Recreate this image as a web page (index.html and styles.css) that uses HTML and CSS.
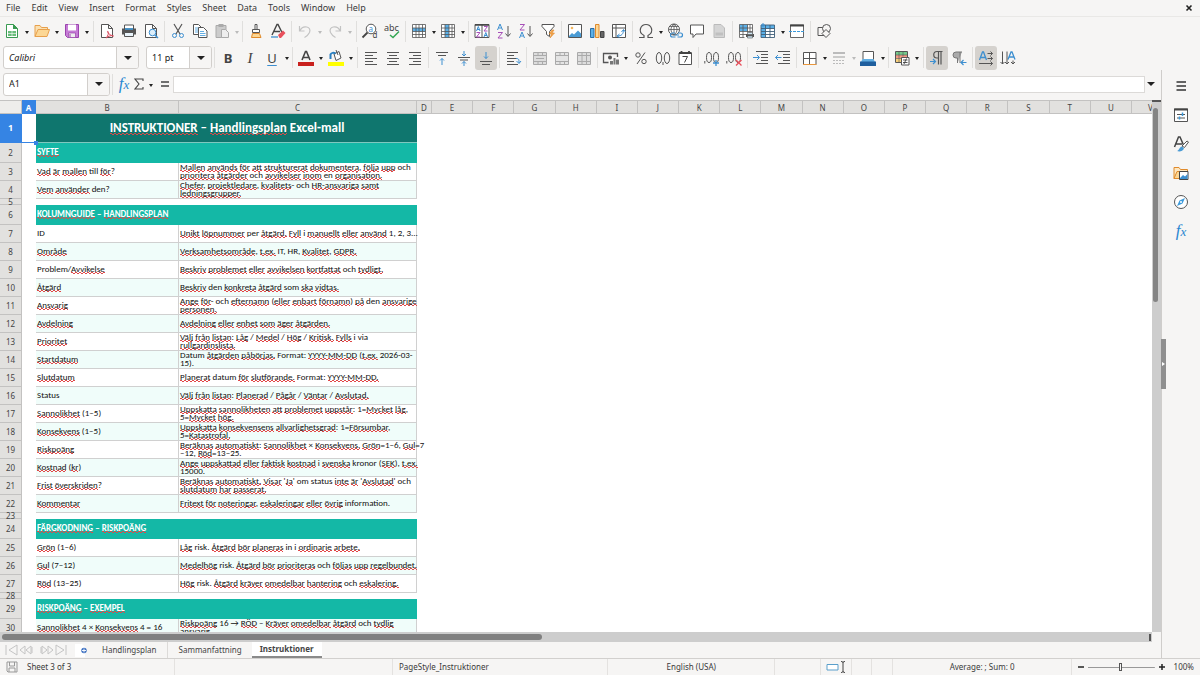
FILE: index.html
```html
<!DOCTYPE html>
<html lang="sv">
<head>
<meta charset="utf-8">
<title>Handlingsplan</title>
<link rel="stylesheet" href="styles.css">
</head>
<body>
<nav class="menubar">
<button>File</button><button>Edit</button><button>View</button><button>Insert</button><button>Format</button><button>Styles</button><button>Sheet</button><button>Data</button><button>Tools</button><button>Window</button><button>Help</button>
<button class="close" aria-label="Close"><svg width="8" height="8" viewBox="0 0 8 8"><path d="M1.500 1.500l5 5M6.500 1.500l-5 5" stroke="#222" stroke-width="1.600"/></svg></button>
</nav>

<div class="toolbar standard">
<button class="tool" aria-label="New"><svg viewBox="0 0 16 16"><path d="M2.500 1.500h7l4 4v9h-11z" fill="#fff" stroke="#3a9b52"/><path d="M9 1v5h5z" fill="#3a9b52"/><path d="M4 8h8v5h-8z" fill="#69bd7b"/><path d="M4 10.500h8M8 8v5" stroke="#fff" stroke-width=".6"/></svg></button><button class="drop" aria-label="New options"></button>
<button class="tool" aria-label="Open"><svg viewBox="0 0 16 16"><path d="M1 13.500v-11h5l1.500 2h6v3" fill="#fbe0b0" stroke="#e8a04c"/><path d="M1 13.500l3-7h11.500l-2.500 7z" fill="#fcd795" stroke="#e8a04c"/></svg></button><button class="drop" aria-label="Recent files"></button>
<button class="tool" aria-label="Save"><svg viewBox="0 0 16 16"><path d="M1.500 1.500h13v13h-11l-2-2z" fill="#c67bd6" stroke="#9a43ad"/><path d="M4 1.500h8v6h-8z" fill="#fff"/><path d="M4.500 10h7v4.500h-7z" fill="#eee" stroke="#9a43ad" stroke-width=".7"/><path d="M6 11v3" stroke="#9a43ad"/></svg></button><button class="drop" aria-label="Save options"></button>
<i class="sep"></i>
<button class="tool" aria-label="Export as PDF"><svg viewBox="0 0 16 16"><path d="M2.500 1.500h7l4 4v9h-11zM9.500 1.500v4h4" fill="#fff" stroke="#555"/><path d="M7 15c2-2 3-5 2-6.500s-1 3 5.500 4.500c-2-1-5 0-7.500 2z" fill="#fff" stroke="#d9485a"/></svg></button>
<button class="tool" aria-label="Print"><svg viewBox="0 0 16 16"><path d="M3.500 2h9v4h-9z" fill="#fff" stroke="#555"/><path d="M1 5.500h14v6h-14z" fill="#555"/><path d="M4 6h8" stroke="#3d9bdc" stroke-width="1.500"/><path d="M3.500 9.500h9v4h-9z" fill="#e9f4fb" stroke="#555"/></svg></button>
<button class="tool" aria-label="Print preview"><svg viewBox="0 0 16 16"><path d="M2.500 1.500h7l4 4v9h-11zM9.500 1.500v4h4" fill="#fff" stroke="#555"/><circle cx="9.500" cy="9.500" r="3.300" fill="#dceefa" stroke="#3d8fd0"/><path d="M12 12l3 3" stroke="#3d8fd0" stroke-width="1.500"/></svg></button>
<i class="sep"></i>
<button class="tool" aria-label="Cut"><svg viewBox="0 0 16 16"><path d="M4 1l6 10M12 1l-6 10" stroke="#555" stroke-width="1.200"/><circle cx="4.500" cy="12.500" r="2" fill="none" stroke="#3d8fd0"/><circle cx="11.500" cy="12.500" r="2" fill="none" stroke="#3d8fd0"/></svg></button>
<button class="tool" aria-label="Copy"><svg viewBox="0 0 16 16"><path d="M1.500 1.500h5l3 3v7h-8z" fill="#fff" stroke="#555"/><path d="M3 5h4M3 7h4M3 9h4" stroke="#3d9bdc" stroke-width=".8"/><path d="M6.500 4.500h5l3.500 3.500v6.500h-8.500z" fill="#fff" stroke="#555"/><path d="M8 8.500h4M8 10.500h5.500M8 12.500h5.500" stroke="#3d9bdc" stroke-width=".8"/></svg></button>
<button class="tool dim" aria-label="Paste" disabled><svg viewBox="0 0 16 16"><path d="M2 2.500h10v12h-10z" fill="#ccc" stroke="#aaa"/><path d="M4.500 1h5v3h-5z" fill="#aaa"/><path d="M7.500 6.500h4l3 3v5h-7z" fill="#eee" stroke="#aaa"/></svg></button><button class="drop narrow dim" aria-label="Paste options" disabled></button>
<i class="sep"></i>
<button class="tool" aria-label="Clone formatting"><svg viewBox="0 0 16 16"><path d="M7 1.500h2v5h-2zM4.500 6.500h7v3h-7z" fill="#fff" stroke="#555"/><path d="M4.500 10.500l-1 4h9.500l-1.500-4z" fill="#fcd795" stroke="#e08a2b"/></svg></button>
<button class="tool" aria-label="Clear formatting"><svg viewBox="0 0 16 16"><path d="M2 12l5-10.500h1l4 8M4 8.500h6" fill="none" stroke="#444" stroke-width="1.400"/><path d="M1 14h7" stroke="#3d8fd0" stroke-width="1.300"/><path d="M8 12l5-4.500 2.500 2.500-4.500 5h-1.500z" fill="#e8505c"/></svg></button>
<i class="sep"></i>
<button class="tool dim" aria-label="Undo" disabled><svg viewBox="0 0 16 16"><path d="M2.500 3v5h5M3 7.500c3-6 12-4 9.500 2-1 2-3 4-5 5" fill="none" stroke="#c3c3c3" stroke-width="1.200"/></svg></button><button class="drop dim" aria-label="Undo list" disabled></button>
<button class="tool dim" aria-label="Redo" disabled><svg viewBox="0 0 16 16"><path d="M13.500 3v5h-5M13 7.500c-3-6-12-4-9.500 2 1 2 3 4 5 5" fill="none" stroke="#c3c3c3" stroke-width="1.200"/></svg></button><button class="drop dim" aria-label="Redo list" disabled></button>
<i class="sep"></i>
<button class="tool" aria-label="Find and replace"><svg viewBox="0 0 16 16"><circle cx="9" cy="6" r="4.800" fill="#fff" stroke="#555"/><path d="M5.500 9.500l-5 5" stroke="#444" stroke-width="1.800"/><text x="6.500" y="8.500" class="glyph blue g8">a</text><text x="10.500" y="15" class="glyph g8">d</text></svg></button>
<button class="tool" aria-label="Spelling"><svg viewBox="0 0 16 16"><text x="0" y="7.500" class="glyph g9">abc</text><path d="M6 12l3 2.500 6-6" fill="none" stroke="#35a855" stroke-width="1.500"/></svg></button>
<i class="sep"></i>
<button class="tool" aria-label="Row"><svg viewBox="0 0 16 16"><path d="M1.500 1.500h13v13h-13z" fill="#fff"/><path d="M1.500 5h13v3.500h-13z" fill="#5bb0e8"/><path d="M1.500 1.500h13v13h-13zM1.500 5h13M1.500 8.500h13M1.500 11.500h13M5 1.500v13M8 1.500v13M11.500 1.500v13" fill="none" stroke="#555" stroke-width=".8"/></svg></button><button class="drop narrow" aria-label="Row options"></button>
<button class="tool" aria-label="Column"><svg viewBox="0 0 16 16"><path d="M1.500 1.500h13v13h-13z" fill="#fff"/><path d="M5 1.500h4v13h-4z" fill="#5bb0e8"/><path d="M1.500 1.500h13v13h-13zM1.500 5h13M1.500 8.500h13M1.500 11.500h13M5 1.500v13M9 1.500v13M12 1.500v13" fill="none" stroke="#555" stroke-width=".8"/></svg></button><button class="drop narrow" aria-label="Column options"></button>
<i class="sep"></i>
<button class="tool" aria-label="Sort"><svg viewBox="0 0 16 16"><path d="M1 1.500h14v13h-14zM8 2v13" fill="#fff" stroke="#555"/><path d="M1 2h14" stroke="#444" stroke-width="1.500"/><path d="M2.500 8l1.800-4.500L6 8M3 6.500h2.500M10 14l1.800-4.500L13.500 14M10.500 12.500H13" fill="none" stroke="#3d8fd0"/><path d="M2.500 9.500h3.500l-3.500 4.500h3.500M10 3.500h3.500L10 8h3.500" fill="none" stroke="#a74fb8"/></svg></button>
<button class="tool" aria-label="Sort ascending"><svg viewBox="0 0 16 16"><path d="M1.500 7l2.500-6 2.500 6M2.500 5h3" fill="none" stroke="#3d8fd0"/><path d="M2 9.500h4.500l-4.500 5.500h4.500" fill="none" stroke="#a74fb8"/><path d="M12 3v10M9.500 10.500l2.500 3 2.500-3" fill="none" stroke="#555"/></svg></button>
<button class="tool" aria-label="Sort descending"><svg viewBox="0 0 16 16"><path d="M2 1.500h4.500l-4.500 5.500h4.500" fill="none" stroke="#a74fb8"/><path d="M1.500 15l2.500-6 2.500 6M2.500 13h3" fill="none" stroke="#3d8fd0"/><path d="M12 3v10M9.500 10.500l2.500 3 2.500-3" fill="none" stroke="#555"/></svg></button>
<button class="tool" aria-label="AutoFilter"><svg viewBox="0 0 16 16"><path d="M2 1.500h12v2l-4.500 5v5l-3-2v-3l-4.500-5z" fill="#fff" stroke="#555"/><path d="M12 7l-3 4h2.500l-1.500 4 4.500-5h-2.500l2-3z" fill="#f3a54d" stroke="#e08a2b" stroke-width=".6"/></svg></button>
<i class="sep"></i>
<button class="tool" aria-label="Insert image"><svg viewBox="0 0 16 16"><path d="M1.500 1.500h13v13h-13z" fill="#fff" stroke="#555"/><path d="M2 13l3-3 2 1.500 4-4 3 3v3.500h-12z" fill="#4a9bd4"/><circle cx="5" cy="5" r="1.300" fill="#f3b65f"/></svg></button>
<button class="tool" aria-label="Insert chart"><svg viewBox="0 0 16 16"><path d="M1.500 5.500h3.500v9h-3.500z" fill="#5bb0e8" stroke="#2a6ea5"/><path d="M6.500 1.500h3.500v13h-3.500z" fill="#fcd795" stroke="#e08a2b"/><path d="M11.500 8.500h3.500v6h-3.500z" fill="#666" stroke="#444"/></svg></button>
<button class="tool" aria-label="Pivot table"><svg viewBox="0 0 16 16"><path d="M1.500 1.500h13v13h-13zM1.500 5h13M5 1.500v13" fill="#fff" stroke="#555"/><path d="M6.500 13c4 0 6-2 6-6M10.500 9l2-2.500 2 2.500M8.500 11l-2.500 2 2.500 1.500" fill="none" stroke="#3d8fd0"/></svg></button>
<i class="sep"></i>
<button class="tool" aria-label="Special character"><svg viewBox="0 0 16 16"><path d="M1 14.500h5v-2c-7-4-3-11 2-11s9 7 2 11v2h5" fill="none" stroke="#555" stroke-width="1.200"/></svg></button><button class="drop narrow" aria-label="Recent characters"></button>
<button class="tool" aria-label="Hyperlink"><svg viewBox="0 0 16 16"><circle cx="7" cy="6.500" r="5.500" fill="#fff" stroke="#555"/><path d="M1.500 6.500h11M3 3.500h8M7 1v11M7 1c-4 3-4 8 0 11M7 1c4 3 4 8 0 11" fill="none" stroke="#555" stroke-width=".8"/><path d="M8 10h-2.500a2 2 0 000 4h3M11 10h2.500a2 2 0 010 4h-3M7.500 12h4.500" fill="none" stroke="#3d8fd0" stroke-width="1.200"/></svg></button>
<button class="tool" aria-label="Comment"><svg viewBox="0 0 16 16"><path d="M1.500 2h13v9h-7.500l-3 3.500v-3.500h-2.500z" fill="#fff" stroke="#555"/></svg></button>
<button class="tool dim" aria-label="Headers and footers" disabled><svg viewBox="0 0 16 16"><path d="M3 1.500h7l3.500 3.500v9.500h-10.500z" fill="#d5d5d5" stroke="#bbb"/><path d="M4.500 9.500h7.500v3h-7.500z" fill="#c0c0c0"/></svg></button>
<i class="sep"></i>
<button class="tool" aria-label="Print area"><svg viewBox="0 0 16 16"><path d="M1.500 1.500h13v13h-13z" fill="#fff"/><path d="M1.500 1.500h8v6.500h-8z" fill="#5bb0e8"/><path d="M1.500 1.500h13v10h-13zM1.500 5h13M1.500 8.500h13M5 1.500v13M9.500 1.500v8M12 1.500v8M1.500 11.500v3h5" fill="none" stroke="#555" stroke-width=".8"/><path d="M8 11h8v3h-8z" fill="#555"/><path d="M9.500 9.500h5v2h-5zM9.500 13h5v2h-5z" fill="#cfe7f6" stroke="#555" stroke-width=".6"/></svg></button>
<button class="tool" aria-label="Freeze panes"><svg viewBox="0 0 16 16"><path d="M1 5h13.500v9.500h-13.500z" fill="#fff"/><path d="M1 2h13.500v3.500h-9v9h-4.500z" fill="#5bb0e8"/><path d="M1 2h13.500v12.500h-13.500zM1 5.500h13.500M1 8.500h13.500M1 11.500h13.500M5.500 2v12.500M10 2v12.500" fill="none" stroke="#3f5f78" stroke-width=".9"/><path d="M1 2h4M3 0v4" stroke="#3d8fd0"/></svg></button><button class="drop narrow" aria-label="Freeze options"></button>
<button class="tool" aria-label="Split window"><svg viewBox="0 0 16 16"><path d="M1.500 2h13v12.500h-13z" fill="#fff" stroke="#666"/><path d="M1 2.500h14" stroke="#444" stroke-width="2"/><path d="M0 8.500h16" stroke="#3d9bdc" stroke-dasharray="3 1"/></svg></button>
<i class="sep"></i>
<button class="tool" aria-label="Draw functions"><svg viewBox="0 0 16 16"><path d="M2 4.500h8v8h-8z" fill="#f6f5f4" stroke="#555"/><circle cx="10.500" cy="5.500" r="4" fill="#f6f5f4" stroke="#555"/><path d="M10 6.500l4 4-4 4-4-4z" fill="#f6f5f4" stroke="#555"/></svg></button>
</div>

<div class="toolbar formatting">
<label class="combo font-name"><select aria-label="Font name"><option>Calibri</option></select><span class="combo-arrow"></span></label>
<label class="combo font-size"><select aria-label="Font size"><option>11 pt</option></select><span class="combo-arrow"></span></label>
<i class="sep"></i>
<button class="tool letter bold">B</button>
<button class="tool letter italic">I</button>
<button class="tool letter under">U</button><button class="drop narrow" aria-label="Underline options"></button>
<i class="sep"></i>
<button class="tool" aria-label="Font color"><svg viewBox="0 0 16 16"><path d="M4 10l3.500-8.500h1l3.500 8.500M5 7.500h6" fill="none" stroke="#444" stroke-width="1.600"/><path d="M0 12h16v4h-16z" fill="#c9211e"/></svg></button><button class="drop" aria-label="Font colors"></button>
<button class="tool" aria-label="Highlighting"><svg viewBox="0 0 16 16"><path d="M6 4l5-2.500 2 6.500-5 2.500z" fill="#fff" stroke="#555"/><path d="M8 0l2 5" stroke="#555"/><path d="M2.500 9v-4.500c1-2 3-2 5-1" fill="none" stroke="#2a7fc0" stroke-width="2"/><path d="M0 12h16v4h-16z" fill="#ffff00"/></svg></button><button class="drop" aria-label="Highlight colors"></button>
<i class="sep"></i>
<button class="tool" aria-label="Align left"><svg viewBox="0 0 16 16"><path d="M2 2.500h12M2 5.500h8M2 8.500h12M2 11.500h8M2 14.500h12" stroke="#555"/></svg></button>
<button class="tool" aria-label="Center"><svg viewBox="0 0 16 16"><path d="M2 2.500h12M4 5.500h8M2 8.500h12M4 11.500h8M2 14.500h12" stroke="#555"/></svg></button>
<button class="tool" aria-label="Align right"><svg viewBox="0 0 16 16"><path d="M2 2.500h12M6 5.500h8M2 8.500h12M6 11.500h8M2 14.500h12" stroke="#555"/></svg></button>
<i class="sep"></i>
<button class="tool" aria-label="Align top"><svg viewBox="0 0 16 16"><path d="M2 2.500h12M4 5.500h8" stroke="#555"/><path d="M8 15v-6.500M6 10.500l2-2 2 2" fill="none" stroke="#3d8fd0"/></svg></button>
<button class="tool" aria-label="Center vertically"><svg viewBox="0 0 16 16"><path d="M2 7.500h12M4 10h8" stroke="#555"/><path d="M8 1v5M6 4l2 2 2-2M8 16v-4.500M6 13.500l2-2 2 2" fill="none" stroke="#3d8fd0"/></svg></button>
<button class="tool active" aria-label="Align bottom"><svg viewBox="0 0 16 16"><path d="M2 11.500h12M4 14.500h8" stroke="#555"/><path d="M8 2v6.500M6 6.500l2 2 2-2" fill="none" stroke="#3d8fd0"/></svg></button>
<i class="sep"></i>
<button class="tool" aria-label="Wrap text"><svg viewBox="0 0 16 16"><path d="M2 2.500h11M2 5.500h7M2 8.500h10M2 11.500h7M2 14.500h11" stroke="#555"/><path d="M11 8.500c3 0 3 1 3 4.500M11.500 11l2.500 2.500 2-2.500" fill="none" stroke="#3d8fd0"/></svg></button>
<i class="sep"></i>
<button class="tool dim" aria-label="Merge and center" disabled><svg viewBox="0 0 16 16"><path d="M1.500 2.500h13v12h-13zM1.500 5.500h13M1.500 11.500h13M6 2.500v3M10.500 2.500v3M6 11.500v3M10.500 11.500v3M4 8.500h8" fill="#ddd" stroke="#aaa"/></svg></button>
<button class="tool dim" aria-label="Merge cells" disabled><svg viewBox="0 0 16 16"><path d="M1.500 2.500h13v12h-13zM1.500 5.500h13M1.500 11.500h13M6 2.500v3M10.500 2.500v3M6 11.500v3M10.500 11.500v3" fill="#e4e4e4" stroke="#aaa"/></svg></button>
<button class="tool dim" aria-label="Split cells" disabled><svg viewBox="0 0 16 16"><path d="M1.500 2.500h13v12h-13zM1.500 5.500h13M1.500 11.500h13M6 2.500v12M10.500 2.500v12" fill="#ddd" stroke="#aaa"/></svg></button>
<i class="sep"></i>
<button class="tool" aria-label="Currency"><svg viewBox="0 0 16 16"><path d="M14.500 7v-3.500h-14v9h5" fill="none" stroke="#555" stroke-width="1.300"/><circle cx="7" cy="7.500" r="2" fill="#555"/><path d="M7 11h3v3.500h-3zM10.500 8h2v6.500h-2zM13 9.500h3v5h-3z" fill="#777"/></svg></button><button class="drop" aria-label="Currency options"></button>
<button class="tool" aria-label="Percent"><svg viewBox="0 0 16 16"><circle cx="5" cy="5" r="2.200" fill="none" stroke="#555"/><circle cx="11" cy="11.500" r="2.200" fill="none" stroke="#555"/><path d="M12 2.500l-8 11.500" stroke="#555"/></svg></button>
<button class="tool" aria-label="Number"><svg viewBox="0 0 16 16"><ellipse cx="4" cy="8" rx="2.700" ry="5.500" fill="none" stroke="#555"/><ellipse cx="12" cy="8" rx="2.700" ry="5.500" fill="none" stroke="#555"/><path d="M8 12v3" stroke="#555"/></svg></button>
<button class="tool" aria-label="Date"><svg viewBox="0 0 16 16"><path d="M2 3h12.500v11.500h-12.500z" fill="#fff" stroke="#555"/><path d="M2 3h12.500M4.500 1v3M12 1v3" stroke="#444" stroke-width="1.800"/><path d="M5.500 6.500h5l-3 6" fill="none" stroke="#444"/></svg></button>
<i class="sep"></i>
<button class="tool" aria-label="Add decimal"><svg viewBox="0 0 16 16"><ellipse cx="5" cy="7.500" rx="2.500" ry="5" fill="none" stroke="#555"/><ellipse cx="12" cy="7.500" rx="2.500" ry="5" fill="none" stroke="#555"/><path d="M.8 11v2.500" stroke="#555"/><path d="M9 13h6M12 10v6" stroke="#3d8fd0" stroke-width="1.300"/></svg></button>
<button class="tool" aria-label="Delete decimal"><svg viewBox="0 0 16 16"><ellipse cx="5" cy="7.500" rx="2.500" ry="5" fill="none" stroke="#555"/><ellipse cx="12" cy="7.500" rx="2.500" ry="5" fill="none" stroke="#555"/><path d="M.8 11v2.500" stroke="#555"/><path d="M10 10l5.500 5.500M15.500 10l-5.500 5.500" stroke="#e8505c" stroke-width="1.300"/></svg></button>
<i class="sep"></i>
<button class="tool" aria-label="Increase indent"><svg viewBox="0 0 16 16"><path d="M3 1.500h12M8 4.500h7M8 7.500h7M8 10.500h7M3 13.500h12" stroke="#555"/><path d="M0 7.500h6M4 5l2.500 2.500-2.500 2.500" fill="none" stroke="#3d8fd0"/></svg></button>
<button class="tool" aria-label="Decrease indent"><svg viewBox="0 0 16 16"><path d="M3 1.500h12M8 4.500h7M8 7.500h7M8 10.500h7M3 13.500h12" stroke="#555"/><path d="M.5 7.500h6M3 5l-2.500 2.500 2.500 2.500" fill="none" stroke="#3d8fd0"/></svg></button>
<i class="sep"></i>
<button class="tool" aria-label="Borders"><svg viewBox="0 0 16 16"><path d="M1.500 2.500h12.500v12h-12.500zM1.500 8.500h12.500M7.500 2.500v12" fill="#fff" stroke="#555"/><path d="M1 14.500h13.500" stroke="#e8963c"/></svg></button><button class="drop narrow" aria-label="Border options"></button>
<button class="tool dim" aria-label="Border style" disabled><svg viewBox="0 0 16 16"><path d="M2 3h12" stroke="#bbb" stroke-width="2"/><path d="M2 7h12" stroke="#bbb" stroke-width="1.500"/><path d="M2 10.500h12M2 13.500h12" stroke="#bbb" stroke-dasharray="2 1"/></svg></button><button class="drop narrow dim" aria-label="Border styles" disabled></button>
<button class="tool" aria-label="Background color"><svg viewBox="0 0 16 16"><path d="M3 1.500h10.500v8h-10.500z" fill="#fff" stroke="#555"/><path d="M1 12h14l-1.500-3h-11z" fill="#62aee2"/><path d="M0 11.500h16v4.500h-16z" fill="#1f5f9e"/></svg></button><button class="drop narrow" aria-label="Background colors"></button>
<i class="sep"></i>
<button class="tool" aria-label="Conditional formatting"><svg viewBox="0 0 16 16"><path d="M1.500 1.500h12v11h-12z" fill="#fff" stroke="#555"/><path d="M2 2h11v3h-11z" fill="#74c98b"/><path d="M2 5h11v3.500h-11z" fill="#f29a86"/><path d="M2 8.500h6v3.500h-6z" fill="#f9d27d"/><path d="M1.500 5h12M1.500 8.500h12M5 1.500v11M9 1.500v5" stroke="#555" stroke-width=".6"/><path d="M7.500 7.500h7.500v7.500h-7.500z" fill="#fff" stroke="#555"/><path d="M9 10h4.500M9 12.500h4.500M12.500 8.500l-2.500 5.500" stroke="#444" stroke-width=".9"/></svg></button><button class="drop" aria-label="Conditional options"></button>
<i class="sep"></i>
<button class="tool active" aria-label="Left to right"><svg viewBox="0 0 16 16"><path d="M13.500 1.500h-5.500a3 3 0 000 6.500h1.500M9.500 1.500v13M12 1.500v13" fill="none" stroke="#555" stroke-width="1.200"/><path d="M1 11.500h5.500M4 9l2.500 2.500-2.500 2.500" fill="none" stroke="#3d8fd0" stroke-width="1.200"/></svg></button>
<button class="tool" aria-label="Right to left"><svg viewBox="0 0 16 16"><path d="M11 2h-6a3 3 0 000 6h1.500v5M9 2v11" fill="#aaa" stroke="#777"/><path d="M15.500 12.500h-5.500M12.500 10l-2.500 2.500 2.500 2.500" fill="none" stroke="#3d8fd0" stroke-width="1.200"/></svg></button>
<i class="sep"></i>
<button class="tool active" aria-label="Text direction horizontal"><svg viewBox="0 0 16 16"><path d="M1.500 10l3-8h1l3 8M2.500 7.500h5" fill="none" stroke="#3d8fd0" stroke-width="1.300"/><path d="M9.500 3.500h5M9.500 8.500h5M1 13.500h13.500M12.500 1.500l2 2-2 2M12.500 6.500l2 2-2 2M12.500 11.500l2 2-2 2" fill="none" stroke="#555"/></svg></button>
<button class="tool" aria-label="Text direction vertical"><svg viewBox="0 0 16 16"><path d="M8 9.500l3-7.500h1l3 7.500M9 7h5" fill="none" stroke="#3d8fd0" stroke-width="1.300"/><path d="M2.500 1.500v12.500M7 1.500v12.500M13 10.500v3.500M.5 12l2 2 2-2M5 12l2 2 2-2M11 12l2 2 2-2" fill="none" stroke="#555"/></svg></button>
</div>

<div class="workarea">
<main class="document">
<div class="formulabar">
<div class="combo name-box"><input type="text" value="A1" aria-label="Name box"><button class="combo-arrow" aria-label="Named ranges"></button></div>
<i class="sep"></i>
<button class="fx" aria-label="Function wizard">f<small>x</small></button>
<button class="formula-tool" aria-label="Select function"><svg width="10" height="12" viewBox="0 0 10 12"><path d="M9 3v-2h-8l4 5-4 5h8v-2" fill="none" stroke="#444" stroke-width="1.100"/></svg></button><button class="drop" aria-label="Functions"></button>
<button class="formula-tool equal" aria-label="Formula"><svg width="10" height="8" viewBox="0 0 10 8"><path d="M1 2h8M1 6h8" stroke="#444" stroke-width="1.600"/></svg></button>
<input class="formula" type="text" aria-label="Formula input">
<button class="expand" aria-label="Expand formula bar"></button>
</div>

<div class="sheet-area">
<div class="grid-wrap">
<table class="sheet">
<colgroup><col class="c-head"><col class="c-a"><col class="c-b"><col class="c-c"><col class="c-d"><col span="17"><col class="c-v"></colgroup>
<thead><tr><th class="corner"></th><th class="sel">A</th><th>B</th><th>C</th><th>D</th><th>E</th><th>F</th><th>G</th><th>H</th><th>I</th><th>J</th><th>K</th><th>L</th><th>M</th><th>N</th><th>O</th><th>P</th><th>Q</th><th>R</th><th>S</th><th>T</th><th>U</th><th class="cut">V</th></tr></thead>
<tbody>
<tr class="title"><th class="sel">1</th><td class="cursor"></td><td colspan="2"><u>INSTRUKTIONER</u> – <u>Handlingsplan</u> Excel-mall</td><td class="rest" colspan="19"></td></tr>
<tr class="section"><th>2</th><td></td><td colspan="2"><u>SYFTE</u></td></tr>
<tr><th>3</th><td></td><td><u>Vad</u> <u>är</u> <u>mallen</u> till <u>för</u>?</td><td><u>Mallen</u> <u>används</u> <u>för</u> <u>att</u> <u>strukturerat</u> <u>dokumentera</u>, <u>följa</u> <u>upp</u> och<br><u>prioritera</u> <u>åtgärder</u> och <u>avvikelser</u> <u>inom</u> en <u>organisation.</u></td></tr>
<tr class="alt"><th>4</th><td></td><td><u>Vem</u> <u>använder</u> den?</td><td><u>Chefer</u>, <u>projektledare</u>, <u>kvalitets</u>- och <u>HR-ansvariga</u> <u>samt</u><br><u>ledningsgrupper.</u></td></tr>
<tr class="gap"><th>5</th><td></td><td></td><td></td></tr>
<tr class="section"><th>6</th><td></td><td colspan="2"><u>KOLUMNGUIDE</u> – <u>HANDLINGSPLAN</u></td></tr>
<tr><th>7</th><td></td><td>ID</td><td><u>Unikt</u> <u>löpnummer</u> per <u>åtgärd.</u> <u>Fyll</u> i <u>manuellt</u> <u>eller</u> <u>använd</u> 1, 2, 3...</td></tr>
<tr class="alt"><th>8</th><td></td><td><u>Område</u></td><td><u>Verksamhetsområde</u>, <u>t.ex.</u> IT, HR, <u>Kvalitet</u>, <u>GDPR.</u></td></tr>
<tr><th>9</th><td></td><td>Problem/<u>Avvikelse</u></td><td><u>Beskriv</u> <u>problemet</u> <u>eller</u> <u>avvikelsen</u> <u>kortfattat</u> och <u>tydligt.</u></td></tr>
<tr class="alt"><th>10</th><td></td><td><u>Åtgärd</u></td><td><u>Beskriv</u> den <u>konkreta</u> <u>åtgärd</u> som <u>ska</u> <u>vidtas.</u></td></tr>
<tr><th>11</th><td></td><td><u>Ansvarig</u></td><td><u>Ange</u> <u>för</u>- och <u>efternamn</u> (<u>eller</u> <u>enbart</u> <u>förnamn</u>) <u>på</u> den <u>ansvarige</u><br><u>personen.</u></td></tr>
<tr class="alt"><th>12</th><td></td><td><u>Avdelning</u></td><td><u>Avdelning</u> <u>eller</u> <u>enhet</u> <u>som</u> <u>äger</u> <u>åtgärden.</u></td></tr>
<tr><th>13</th><td></td><td><u>Prioritet</u></td><td><u>Välj</u> <u>från</u> <u>listan</u>: <u>Låg</u> / <u>Medel</u> / <u>Hög</u> / <u>Kritisk.</u> <u>Fylls</u> i via<br><u>rullgardinslista.</u></td></tr>
<tr class="alt"><th>14</th><td></td><td><u>Startdatum</u></td><td>Datum <u>åtgärden</u> <u>påbörjas.</u> Format: <u>YYYY-MM-DD</u> (<u>t.ex.</u> 2026-03-<br>15).</td></tr>
<tr><th>15</th><td></td><td><u>Slutdatum</u></td><td><u>Planerat</u> datum <u>för</u> <u>slutförande.</u> Format: <u>YYYY-MM-DD.</u></td></tr>
<tr class="alt"><th>16</th><td></td><td>Status</td><td><u>Välj</u> <u>från</u> <u>listan</u>: <u>Planerad</u> / <u>Pågår</u> / <u>Väntar</u> / <u>Avslutad.</u></td></tr>
<tr><th>17</th><td></td><td><u>Sannolikhet</u> (1–5)</td><td><u>Uppskatta</u> <u>sannolikheten</u> <u>att</u> <u>problemet</u> <u>uppstår</u>: 1=<u>Mycket</u> <u>låg</u>,<br>5=<u>Mycket</u> <u>hög.</u></td></tr>
<tr class="alt"><th>18</th><td></td><td><u>Konsekvens</u> (1–5)</td><td><u>Uppskatta</u> <u>konsekvensens</u> <u>allvarlighetsgrad</u>: 1=<u>Försumbar</u>,<br>5=<u>Katastrofal.</u></td></tr>
<tr><th>19</th><td></td><td><u>Riskpoäng</u></td><td><u>Beräknas</u> <u>automatiskt</u>: <u>Sannolikhet</u> × <u>Konsekvens.</u> <u>Grön</u>=1–6, <u>Gul</u>=7<br>–12, <u>Röd</u>=13–25.</td></tr>
<tr class="alt"><th>20</th><td></td><td><u>Kostnad</u> (<u>kr</u>)</td><td><u>Ange</u> <u>uppskattad</u> <u>eller</u> <u>faktisk</u> <u>kostnad</u> i <u>svenska</u> kronor (<u>SEK</u>), <u>t.ex.</u><br>15000.</td></tr>
<tr><th>21</th><td></td><td><u>Frist</u> <u>överskriden</u>?</td><td><u>Beräknas</u> <u>automatiskt.</u> <u>Visar</u> '<u>Ja</u>' om status <u>inte</u> <u>är</u> '<u>Avslutad</u>' och<br><u>slutdatum</u> <u>har</u> <u>passerat.</u></td></tr>
<tr class="alt"><th>22</th><td></td><td><u>Kommentar</u></td><td><u>Fritext</u> <u>för</u> <u>noteringar</u>, <u>eskaleringar</u> <u>eller</u> <u>övrig</u> information.</td></tr>
<tr class="gap"><th>23</th><td></td><td></td><td></td></tr>
<tr class="section"><th>24</th><td></td><td colspan="2"><u>FÄRGKODNING</u> – <u>RISKPOÄNG</u></td></tr>
<tr><th>25</th><td></td><td><u>Grön</u> (1–6)</td><td><u>Låg</u> risk. <u>Åtgärd</u> <u>bör</u> <u>planeras</u> in i <u>ordinarie</u> <u>arbete.</u></td></tr>
<tr class="alt"><th>26</th><td></td><td><u>Gul</u> (7–12)</td><td><u>Medelhög</u> risk. <u>Åtgärd</u> <u>bör</u> <u>prioriteras</u> och <u>följas</u> <u>upp</u> <u>regelbundet.</u></td></tr>
<tr><th>27</th><td></td><td><u>Röd</u> (13–25)</td><td><u>Hög</u> risk. <u>Åtgärd</u> <u>kräver</u> <u>omedelbar</u> <u>hantering</u> och <u>eskalering.</u></td></tr>
<tr class="gap"><th>28</th><td></td><td></td><td></td></tr>
<tr class="section"><th>29</th><td></td><td colspan="2"><u>RISKPOÄNG</u> – <u>EXEMPEL</u></td></tr>
<tr class="alt"><th>30</th><td></td><td><u>Sannolikhet</u> 4 × <u>Konsekvens</u> 4 = 16</td><td><u>Riskpoäng</u> 16 → <u>RÖD</u> – <u>Kräver</u> <u>omedelbar</u> <u>åtgärd</u> och <u>tydlig</u><br><u>ansvarig.</u></td></tr>
</tbody>
</table>
</div>
<div class="vscroll"><div class="thumb"></div></div>
</div>
<div class="hscroll"><div class="thumb"></div><div class="split"></div></div>

<div class="tabbar">
<svg class="sheet-nav" width="62" height="12" viewBox="0 0 62 12"><path d="M1 1v10M12 1l-8 5 8 5zM15 6l5-4v8zM21 6l5-4v8zM27 3v6M36 3v6M42 6l-5-4v8zM48 6l-5-4v8zM51 1l8 5-8 5zM61 1v10" fill="none" stroke="#c4c4c4"/></svg>
<button class="add-sheet" aria-label="Add sheet"><svg width="12" height="13" viewBox="0 0 12 13"><path d="M0 0h7l3 3v10h-10z" fill="#fff"/><circle cx="9" cy="6.500" r="2.700" fill="#3b6ec0"/><path d="M7 6.500h4M9 4.500v4" stroke="#fff" stroke-width=".9"/></svg></button>
<button class="tab">Handlingsplan</button><button class="tab">Sammanfattning</button><button class="tab current">Instruktioner</button>
</div>
</main>

<aside class="sidebar">
<button class="splitter" aria-label="Hide sidebar"></button>
<button aria-label="Sidebar settings"><svg viewBox="0 0 16 16"><path d="M3.500 4h9.500M3.500 8h9.500M3.500 12h9.500" stroke="#333" stroke-width="1.400"/></svg></button>
<button aria-label="Properties"><svg viewBox="0 0 16 16"><path d="M1.500 2h13v12.500h-13z" fill="#fff" stroke="#555"/><path d="M1 2.500h14" stroke="#444" stroke-width="2"/><path d="M4 7.500h8M4 11h8" stroke="#555"/><path d="M9.500 5.500v3.500M6.500 9.500v3" stroke="#3d9bdc" stroke-width="1.500"/></svg></button>
<button aria-label="Styles"><svg viewBox="0 0 16 16"><path d="M1.500 11l4-10h1.500l3.500 8M3 8h6" fill="none" stroke="#444" stroke-width="1.500"/><path d="M9 10l5-5 1.500 1-4 5.500z" fill="#fff" stroke="#555"/><path d="M4 15c2 0 2-4 5-4.500l2 2c-1 3-5 3.500-7 2.500z" fill="#4a9bd4"/></svg></button>
<button aria-label="Gallery"><svg viewBox="0 0 16 16"><path d="M1 13.500v-11h5l1.500 2h7v3" fill="#fde6bf" stroke="#e08a2b"/><path d="M1 13.500l3-7h4v7z" fill="#fcd795" stroke="#e08a2b"/><path d="M6.500 6.500h8.500v8h-8.500z" fill="#fff" stroke="#444"/><path d="M7 13l3-3 2 1.500 2.500-2.500v5h-7.500z" fill="#3d8fd0"/></svg></button>
<button aria-label="Navigator"><svg viewBox="0 0 16 16"><circle cx="8" cy="8" r="6.500" fill="#fff" stroke="#555"/><path d="M12 4l-2.500 5.500-5.500 2.500 2.500-5.500z" fill="#3d9bdc"/><circle cx="8" cy="8" r="1" fill="#fff"/></svg></button>
<button class="fx" aria-label="Functions">f<small>x</small></button>
</aside>
</div>

<footer class="statusbar">
<span class="s-sheet"><svg width="12" height="12" viewBox="0 0 12 12"><path d="M1 1h10v10h-9l-1-1zM3.500 1v4h5v-4M3 11v-4h6v4" fill="none" stroke="#999"/></svg>Sheet 3 of 3</span><span class="s-blank"></span><span class="s-style">PageStyle_Instruktioner</span><span class="s-lang">English (USA)</span><span class="s-ins"></span><span class="s-mode"><svg width="20" height="12" viewBox="0 0 20 12"><path d="M1 3.500h11v5.500h-11z" fill="#fff" stroke="#5a9fcb"/><path d="M17 1v10M15 .5c1.500 0 2 .5 2 1 0-.5.5-1 2-1M15 11.500c1.500 0 2-.5 2-1 0 .5.500 1 2 1" fill="none" stroke="#444"/></svg></span><span class="s-sign"></span><span class="s-sign"></span><span class="s-sum">Average: ; Sum: 0</span>
<div class="s-zoom"><button aria-label="Zoom out"><svg width="8" height="8" viewBox="0 0 8 8"><path d="M1 4h6" stroke="#222" stroke-width="1.500"/></svg></button><input type="range" min="0" max="100" value="49" aria-label="Zoom"><button aria-label="Zoom in"><svg width="8" height="8" viewBox="0 0 8 8"><path d="M1 4h6M4 1v6" stroke="#222" stroke-width="1.500"/></svg></button><span>100%</span></div>
</footer>
</body>
</html>
```

FILE: styles.css
```css
* { box-sizing: border-box; }

body {
  margin: 0;
  height: 100vh;
  display: flex;
  flex-direction: column;
  overflow: hidden;
  background: #f6f5f4;
  color: #3a3a3a;
  font: 9px/12px "Noto Sans", sans-serif;
}

button, input, select {
  margin: 0;
  padding: 0;
  border: 0;
  background: none;
  color: inherit;
  font: inherit;
  appearance: none;
}

svg { display: block; }

/* Menu bar */
.menubar {
  display: flex;
  align-items: center;
  gap: 11px;
  height: 17px;
  padding: 0 7px 0 6px;
  border-bottom: 1px solid #e9e8e6;
}
.close { margin-left: auto; }

/* Toolbars */
.toolbar {
  display: flex;
  align-items: center;
  flex: none;
}
.standard { height: 28px; padding-left: 1px; }
.formatting { height: 25px; padding-left: 3px; }
.tool {
  display: flex;
  align-items: center;
  justify-content: center;
  flex: none;
  width: 22px;
  height: 24px;
  border-radius: 3px;
}
.tool svg { width: 16px; height: 16px; overflow: visible; }
.active { background: #d5d2ce; }
.letter { font-size: 13px; line-height: 16px; color: #444; }
.bold { font-weight: 700; }
.italic { font-family: "Liberation Serif", serif; font-style: italic; font-size: 15px; }
.under { text-decoration: underline #3d8fd0; text-underline-offset: 2px; }
.drop { flex: none; width: 8px; height: 24px; }
.narrow { width: 7px; }
.drop::before, .combo-arrow::before, .expand::before {
  content: "";
  display: block;
  margin: 2px auto 0;
  width: 0;
  border: 2px solid transparent;
  border-top: 3px solid #222;
  border-bottom: 0;
}
.drop.dim::before { border-top-color: #bbb; }
.sep { flex: none; width: 5px; height: 21px; padding: 0 2px; background: #e0dfdd content-box; }
.glyph { font-family: "Noto Sans", sans-serif; fill: #444; }
.blue { fill: #3d8fd0; }
.g8 { font-size: 8px; }
.g9 { font-size: 9px; }

.combo {
  display: flex;
  flex: none;
  height: 23px;
  border: 1px solid #d2cfcc;
  border-radius: 3px;
  background: #fff;
  color: #222;
  overflow: hidden;
}
.combo select, .combo input { flex: 1; min-width: 0; padding-left: 5px; }
.combo-arrow {
  display: flex;
  align-items: center;
  width: 22px;
  border-left: 1px solid #d2cfcc;
  background: #f6f5f4;
}
.combo-arrow::before, .expand::before { margin: 0 auto; border-width: 4px 4px 0; }
.font-name { width: 136px; margin-right: 7px; }
.font-name select { font-style: italic; }
.font-size { width: 66px; }

/* Work area */
.workarea { display: flex; flex: 1; min-height: 0; }
.document { display: flex; flex-direction: column; flex: 1; min-width: 0; }
.formulabar {
  display: flex;
  align-items: center;
  flex: none;
  height: 30px;
  padding: 0 4px 2px 3px;
}
.name-box { width: 107px; }
.fx {
  color: #2a86d1;
  font: italic 17px/16px "Liberation Serif", serif;
}
.fx small { font-size: 13px; }
.formulabar .fx { width: 18px; }
.formula-tool { flex: none; width: 10px; margin: 0 3px 0 1px; }
.equal { margin: 0 3px 0 5px; }
.formula { flex: 1; height: 17px; border: 1px solid #dcdad8; background: #fff; }
.expand { width: 12px; }

.sheet-area { display: flex; flex: 1; min-height: 0; }
.grid-wrap { flex: 1; min-width: 0; overflow: hidden; background: #fff; }
.sheet {
  width: 100%;
  table-layout: fixed;
  border-collapse: separate;
  border-spacing: 0;
}
.c-head { width: 22px; }
.c-a { width: 14px; }
.c-b { width: 143px; }
.c-c { width: 238px; }
.c-d { width: 15px; }
.c-v { width: 20px; }
.sheet th {
  height: 18px;
  padding: 0;
  border-right: 1px solid #c3c2c1;
  border-bottom: 1px solid #c3c2c1;
  background: #e2e1df;
  color: #444;
  font-size: 8px;
  font-weight: 400;
  line-height: 12px;
}
.sheet thead th { height: 14px; border-top: 1px solid #c3c2c1; line-height: 11px; }
.sheet .corner { background: #eeedeb; }
.sheet th.sel { background: #3584e4; border-color: #3584e4; color: #fff; font-weight: 700; }
.sheet .title th { height: 29px; font-size: 9px; }
.sheet th.cut { padding-left: 16px; border-right: 0; text-align: left; overflow: hidden; }
.sheet td {
  padding: 0 0 2px 1px;
  color: #111;
  font: 9px/8px Carlito, Lato, sans-serif;
  white-space: nowrap;
}
.sheet td:nth-child(n+3) { box-shadow: inset -1px -1px #d0d0d0; }
.sheet .alt td:nth-child(n+3) { background: #f0fdfa; }
.sheet .section th { height: 20px; }
.sheet .section td:nth-child(3) { background: #14b8a6; box-shadow: none; color: #fff; font-weight: 700; }
.sheet .gap th { height: 6px; line-height: 5px; }
.sheet .gap td:nth-child(n+3) { box-shadow: none; }
.sheet .title td:nth-child(3) {
  background: #0f766e;
  box-shadow: inset 0 -1px #7fc8bf;
  color: #fff;
  font-size: 13px;
  line-height: 16px;
  font-weight: 700;
  text-align: center;
}
.sheet .title .rest { box-shadow: none; }
.cursor { position: relative; border-bottom: 1px solid #3584e4; }
.cursor::after {
  content: "";
  position: absolute;
  right: -2px;
  bottom: -3px;
  width: 4px;
  height: 4px;
  background: #3584e4;
}

/* Spell-check squiggle: two offset dashed rows form a small zigzag */
.sheet u {
  text-decoration: none;
  background:
    repeating-linear-gradient(90deg, #e04848 0 2px, transparent 2px 4px) 0 calc(100% - 1px) / 100% 1px no-repeat,
    repeating-linear-gradient(90deg, transparent 0 2px, #e04848 2px 4px) 0 100% / 100% 1px no-repeat;
}

.vscroll { flex: none; width: 9px; padding: 6px 3px 0 1px; border-top: 2px solid #555; background: #cdcdcd; }
.vscroll .thumb { height: 37%; border-radius: 3px; background: #848484; }
.hscroll {
  display: flex;
  align-items: center;
  justify-content: space-between;
  flex: none;
  height: 10px;
  margin-right: 9px;
  padding: 0 1px 0 2px;
  background: #cdcdcd;
}
.hscroll .thumb { width: 47%; height: 6px; border-radius: 3px; background: #808080; }
.split { width: 2px; height: 7px; background: #555; }

.tabbar { display: flex; align-items: center; flex: none; height: 16px; padding-left: 5px; font-size: 8px; }
.sheet-nav { margin-right: 8px; }
.add-sheet { margin-right: 4px; }
.tab { height: 16px; padding: 0 10px 0 11px; color: #444; }
.tab + .tab { border-left: 1px solid #dcdad8; }
.tab.current { padding: 0 8px; border-left: 0; border-bottom: 2px solid #8a8a8a; background: #fff; font-weight: 700; }

/* Sidebar */
.sidebar {
  position: relative;
  display: flex;
  flex-direction: column;
  align-items: center;
  gap: 13px;
  flex: none;
  width: 39px;
  padding-top: 8px;
  border-left: 1px solid #cfcdcb;
}
.sidebar > button:not(.splitter) { width: 16px; height: 16px; }
.splitter {
  position: absolute;
  left: -1px;
  top: 269px;
  width: 5px;
  height: 50px;
  background: #8f8f8f;
}
.splitter::before {
  content: "";
  display: block;
  width: 0;
  margin-left: 1px;
  border: 2px solid transparent;
  border-left: 3px solid #fff;
  border-right: 0;
}

/* Status bar */
.statusbar { display: flex; flex: none; height: 17px; border-top: 1px solid #d2d0ce; font-size: 8px; }
.statusbar > span {
  display: flex;
  align-items: center;
  min-width: 0;
  border-right: 1px solid #e4e2e0;
  white-space: nowrap;
}
.statusbar .s-sheet { flex: 169 1 0; padding-left: 6px; gap: 9px; }
.statusbar .s-blank { flex: 219 1 0; }
.statusbar .s-style { flex: 210 1 0; padding-left: 6px; }
.statusbar .s-lang { flex: 167 1 0; justify-content: center; }
.statusbar .s-ins { flex: 45 1 0; }
.statusbar .s-mode { flex: 30 1 0; justify-content: center; }
.statusbar .s-sign { flex: 20 1 0; }
.statusbar .s-sum { flex: 179 1 0; justify-content: center; }
.s-zoom { display: flex; align-items: center; flex: 118 1 0; min-width: 0; padding: 0 6px 0 5px; gap: 3px; }
.s-zoom button { flex: none; }
.s-zoom input { flex: 1; width: 0; min-width: 0; height: 10px; background: linear-gradient(#999, #999) center / 100% 1px no-repeat; }
.s-zoom input::-webkit-slider-thumb {
  appearance: none;
  width: 3px;
  height: 8px;
  border: 1px solid #555;
  background: #f6f5f4;
}
.s-zoom span { margin-left: 5px; }
```
